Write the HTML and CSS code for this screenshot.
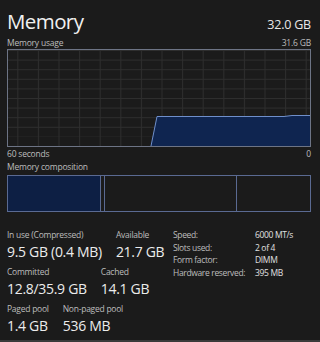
FILE: index.html
```html
<!DOCTYPE html>
<html>
<head>
<meta charset="utf-8">
<link rel="stylesheet" href="styles.css">
</head>
<body>
<div class="page">
  <div class="head">
    <span class="title">Memory</span>
    <span class="total">32.0 GB</span>
  </div>
  <div class="caption"><span>Memory usage</span><span>31.6 GB</span></div>
  <div class="graph">
    <svg width="302" height="96" viewBox="0 0 302 96">
      <defs>
        <pattern id="gv" x="9.3" y="0" width="20.6" height="96" patternUnits="userSpaceOnUse">
          <line x1="0.5" y1="0" x2="0.5" y2="96" stroke="#2e2e2e" stroke-width="1"/>
        </pattern>
        <pattern id="gh" x="0" y="9.6" width="302" height="9.6" patternUnits="userSpaceOnUse">
          <line x1="0" y1="0.5" x2="302" y2="0.5" stroke="#2e2e2e" stroke-width="1"/>
        </pattern>
      </defs>
      <rect x="0" y="0" width="302" height="96" fill="url(#gv)"/>
      <rect x="0" y="0" width="302" height="86.5" fill="url(#gh)"/>
      <polygon points="143,96 149,66.5 276,66.5 284,65.5 302,65.5 302,96" fill="#0f2550"/>
      <polyline points="143,96 149,66.5 276,66.5 284,65.5 302,65.5" fill="none" stroke="#6f8fcb" stroke-width="1"/>
    </svg>
  </div>
  <div class="caption"><span>60 seconds</span><span>0</span></div>
  <div class="caption"><span>Memory composition</span></div>
  <div class="comp">
    <div class="seg inuse"></div>
    <div class="seg modified"></div>
    <div class="seg standby"></div>
    <div class="seg free"></div>
  </div>
  <div class="stats">
    <div class="left">
      <div class="row">
        <div class="stat"><div class="label">In use (Compressed)</div><div class="value">9.5 GB (0.4 MB)</div></div>
        <div class="stat"><div class="label">Available</div><div class="value">21.7 GB</div></div>
      </div>
      <div class="row">
        <div class="stat"><div class="label">Committed</div><div class="value">12.8/35.9 GB</div></div>
        <div class="stat"><div class="label">Cached</div><div class="value">14.1 GB</div></div>
      </div>
      <div class="row">
        <div class="stat"><div class="label">Paged pool</div><div class="value">1.4 GB</div></div>
        <div class="stat"><div class="label">Non-paged pool</div><div class="value">536 MB</div></div>
      </div>
    </div>
    <div class="right">
      <span class="k">Speed:</span><span class="v">6000 MT/s</span>
      <span class="k">Slots used:</span><span class="v">2 of 4</span>
      <span class="k">Form factor:</span><span class="v">DIMM</span>
      <span class="k">Hardware reserved:</span><span class="v">395 MB</span>
    </div>
  </div>
</div>
</body>
</html>
```

FILE: styles.css
```css
html, body {
  margin: 0;
  padding: 0;
  background: #1b1b1b;
}
body {
  width: 320px;
  height: 342px;
  overflow: hidden;
  font-family: "Open Sans", "Noto Sans", sans-serif;
  color: #e6e6e6;
}
.page {
  box-sizing: border-box;
  height: 342px;
  padding: 8px 9px 0 7px;
  border-bottom: 2px solid #3a3a3a;
}
.head {
  display: flex;
  justify-content: space-between;
  align-items: baseline;
  height: 26px;
  line-height: 26px;
}
.title {
  font-size: 20.5px;
  letter-spacing: -0.6px;
  color: #f0f0f0;
}
.total {
  font-size: 12.5px;
  letter-spacing: -0.2px;
  color: #e8e8e8;
}
.caption {
  display: flex;
  justify-content: space-between;
  font-size: 8.5px;
  letter-spacing: -0.2px;
  line-height: 12px;
  color: #bdbdbd;
  margin-top: 1px;
}
.head + .caption {
  margin-top: 3px;
}
.graph {
  width: 304px;
  height: 98px;
  box-sizing: border-box;
  border: 1px solid #6d7485;
}
.graph svg {
  display: block;
}
.comp {
  display: flex;
  width: 304px;
  height: 37px;
  box-sizing: border-box;
  border: 1px solid #5a6a92;
  margin-top: 2px;
}
.seg {
  box-sizing: border-box;
  border-left: 1px solid #5a6a92;
}
.seg.inuse {
  border-left: none;
  width: 92px;
  background: #0d1f44;
}
.seg.modified { width: 4px; }
.seg.standby { width: 132px; }
.seg.free { flex: 1; }
.stats {
  display: flex;
  margin-top: 17px;
}
.left {
  width: 166px;
  display: flex;
  flex-direction: column;
  gap: 4px;
}
.row {
  display: flex;
  gap: 14px;
}
.label {
  font-size: 8.5px;
  letter-spacing: -0.25px;
  line-height: 12px;
  color: #bdbdbd;
  white-space: nowrap;
}
.value {
  font-size: 14px;
  letter-spacing: -0.3px;
  line-height: 20px;
  margin-top: 1px;
  color: #ececec;
  white-space: nowrap;
}
.right {
  display: grid;
  grid-template-columns: 82px auto;
  align-content: start;
  font-size: 8.5px;
  letter-spacing: -0.35px;
  line-height: 12.7px;
}
.k {
  color: #bdbdbd;
  white-space: nowrap;
}
.v {
  color: #e0e0e0;
  white-space: nowrap;
}
```
